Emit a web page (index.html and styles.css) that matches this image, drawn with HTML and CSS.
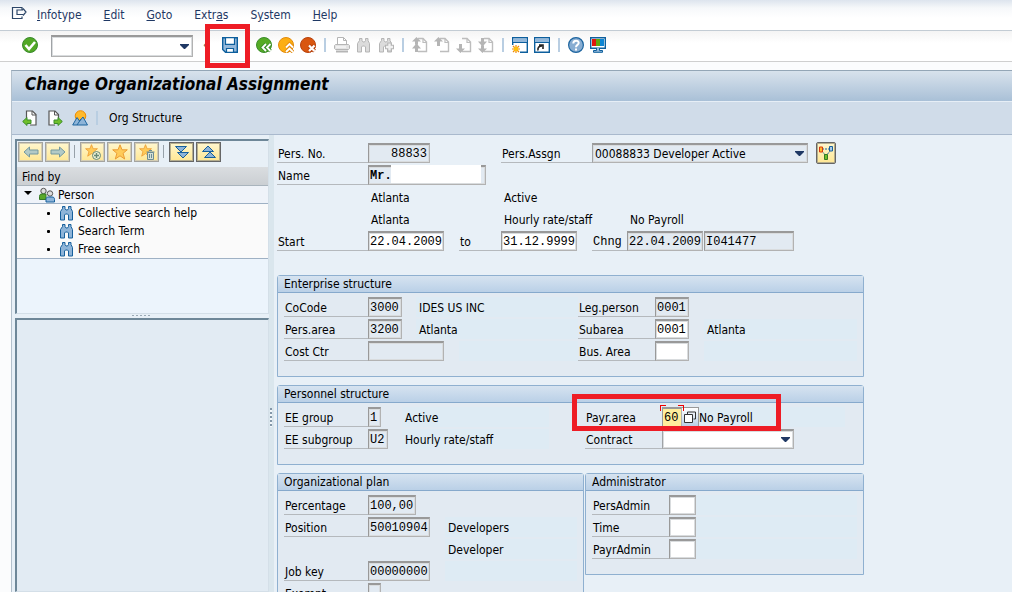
FILE: index.html
```html
<!DOCTYPE html>
<html lang="en">
<head>
    <meta charset="UTF-8">
    <meta name="viewport" content="width=device-width, initial-scale=1.0">
    <title>Change Organizational Assignment</title>
    <link rel="stylesheet" href="styles.css">
</head>
<body>

<!-- shared icon shapes -->
<svg class="defs" aria-hidden="true">
    <symbol id="binoculars" viewBox="0 0 16 16">
        <path d="M3.500 1.500H6v2l1 1.500h1.500l1-1.500v-2H12v2l1.500 3V15h-4v-5l-1-1h-2l-1 1v5h-4V6.500l2-3z"/>
    </symbol>
    <symbol id="page" viewBox="0 0 16 16">
        <path d="M6 1.500h5l3.500 3.500v9.500H6" fill="none" stroke-width="1.400"/>
        <path d="M11 1.500v4h3.500" fill="none" stroke-width="1.200"/>
    </symbol>
    <symbol id="star" viewBox="0 0 16 16">
        <path d="M8 .8l2 5h5.300l-4.200 3.500 1.600 5.700L8 11.800 3.300 15l1.600-5.700L.7 5.800H6z"/>
    </symbol>
</svg>

<nav class="menubar">
    <button class="icon-btn" type="button" aria-label="Menu">
        <svg viewBox="0 0 16 14"><path d="M11 10.500v2H1.500v-11H11v2M12 8.500H6V4h6M12 2.500l3 3.500-3 3.500" fill="none" stroke="#2c4668" stroke-width="1.200"/></svg>
    </button>
    <a href="#"><u>I</u>nfotype</a>
    <a href="#"><u>E</u>dit</a>
    <a href="#"><u>G</u>oto</a>
    <a href="#">Extr<u>a</u>s</a>
    <a href="#">S<u>y</u>stem</a>
    <a href="#"><u>H</u>elp</a>
</nav>

<div class="toolbar">
    <button class="icon-btn" type="button" aria-label="Enter">
        <svg viewBox="0 0 16 16"><circle cx="8" cy="8" r="7.500" fill="#52a826" stroke="#3a8a2c"/><path d="M3.500 8l3.500 4L13 5" fill="none" stroke="#fff" stroke-width="2.600"/></svg>
    </button>
    <select class="command" aria-label="Command"><option></option></select>
    <span class="collapse">«</span>
    <div class="save">
        <button class="icon-btn" type="button" aria-label="Save">
            <svg viewBox="0 0 16 16"><path d="M.7.700h14.600v14.600H3.500L.7 12.500z" fill="#94b8da" stroke="#0d5f9d" stroke-width="1.400"/><path d="M3.500.700h9v6.600h-9z" fill="#fff" stroke="#0d5f9d" stroke-width="1.200"/><path d="M4.500 11.500h7v3.800h-7z" fill="#fff" stroke="#0d5f9d" stroke-width="1.200"/></svg>
        </button>
        <span class="mark mark-save"></span>
    </div>
    <button class="icon-btn" type="button" aria-label="Back">
        <svg viewBox="0 0 16 16"><circle cx="8" cy="8" r="7.500" fill="#56ab26" stroke="#3b8d2a"/><path d="M10 7L6.500 10.500 10 14M14.500 7L11 10.500l3.500 3.500" fill="none" stroke="#3b8d2a" stroke-width="3.600"/><path d="M10 7L6.500 10.500 10 14M14.500 7L11 10.500l3.500 3.500" fill="none" stroke="#fff" stroke-width="1.800"/></svg>
    </button>
    <button class="icon-btn" type="button" aria-label="Exit">
        <svg viewBox="0 0 16 16"><circle cx="8" cy="8" r="7.500" fill="#fcae12" stroke="#e28a0c"/><path d="M8 10.500L11.500 7l3.500 3.500M8 15l3.500-3.500L15 15" fill="none" stroke="#e28a0c" stroke-width="3.600"/><path d="M8 10.500L11.500 7l3.500 3.500M8 15l3.500-3.500L15 15" fill="none" stroke="#fff" stroke-width="1.800"/></svg>
    </button>
    <button class="icon-btn" type="button" aria-label="Cancel">
        <svg viewBox="0 0 16 16"><circle cx="8" cy="8" r="7.500" fill="#d9560f" stroke="#b8420c"/><path d="M9 8.500l5.500 5.500M14.500 8.500L9 14" stroke="#b8420c" stroke-width="4"/><path d="M9 8.500l5.500 5.500M14.500 8.500L9 14" stroke="#fff" stroke-width="2.200"/></svg>
    </button>
    <span class="sep"></span>
    <button class="icon-btn" type="button" aria-label="Print">
        <svg viewBox="0 0 16 16" stroke="#b5b5b5"><path d="M3.500 7V.500h6l3 3V7" fill="#fff"/><path d="M9.500.500v3h3" fill="none"/><path d="M1.500 7.500h13l1 1v3l-1 1h-13l-1-1v-3z" fill="#e3e3e3"/><path d="M2 10h10" stroke="#fff"/><path d="M2 14.500h12" stroke-width="2"/></svg>
    </button>
    <button class="icon-btn" type="button" aria-label="Find">
        <svg class="binoc-off"><use href="#binoculars"/></svg>
    </button>
    <button class="icon-btn" type="button" aria-label="Find next">
        <svg class="binoc-off" viewBox="0 0 16 16"><use href="#binoculars" width="16" height="16"/><path d="M11.500 5.500v9M7 10h9" stroke="#b5b5b5" stroke-width="4.500"/><path d="M11.500 6.500v7M8 10h7" stroke="#f0f0f0" stroke-width="2.400"/></svg>
    </button>
    <span class="sep"></span>
    <button class="icon-btn" type="button" aria-label="First page">
        <svg viewBox="0 0 16 16" stroke="#bdbdbd"><use href="#page"/><path d="M4.500 0L9 4.500H6v3h-.5L9 11.500H6V15H3v-3.500H0l3.500-4H3v-3H0z" fill="#b5b5b5" stroke="none"/></svg>
    </button>
    <button class="icon-btn" type="button" aria-label="Previous page">
        <svg viewBox="0 0 16 16" stroke="#bdbdbd"><use href="#page"/><path d="M4.500 0L9 4.500H6V9H3V4.500H0z" fill="#b5b5b5" stroke="none"/></svg>
    </button>
    <button class="icon-btn" type="button" aria-label="Next page">
        <svg viewBox="0 0 16 16" stroke="#bdbdbd"><use href="#page"/><path d="M4.500 16L9 11.500H6V7H3v4.500H0z" fill="#b5b5b5" stroke="none"/></svg>
    </button>
    <button class="icon-btn" type="button" aria-label="Last page">
        <svg viewBox="0 0 16 16" stroke="#bdbdbd"><use href="#page"/><path d="M4.500 16L9 11.500H6v-3h-.5L9 4.500H6V1H3v3.500H0l3.500 4H3v3H0z" fill="#b5b5b5" stroke="none"/></svg>
    </button>
    <span class="sep"></span>
    <button class="icon-btn" type="button" aria-label="New session">
        <svg viewBox="0 0 16 16"><path d="M.7 8V.700h14.600v14.600H8" fill="#fff" stroke="#0d5f9d" stroke-width="1.400"/><path d="M1 1.500h14v3.500H1z" fill="#94b8da"/><path d="M0 5.500h16" stroke="#0d5f9d"/><path d="M4 8v8M0 12h8M1 9l6 6M7 9l-6 6" stroke="#f08a00" stroke-width="1.200"/><circle cx="4" cy="12" r="2.300" fill="#ffc20e"/></svg>
    </button>
    <button class="icon-btn" type="button" aria-label="Shortcut">
        <svg viewBox="0 0 16 16"><path d="M.7.700h14.600v14.600H.7z" fill="#fff" stroke="#0d5f9d" stroke-width="1.400"/><path d="M1 1.500h14v3.500H1z" fill="#94b8da"/><path d="M0 5.500h16" stroke="#0d5f9d"/><path d="M4 13.500c-.5-3 1-4.500 4-4.500M5 8h4v4" fill="none" stroke="#222" stroke-width="1.600"/></svg>
    </button>
    <span class="sep"></span>
    <button class="icon-btn" type="button" aria-label="Help">
        <svg viewBox="0 0 16 16"><circle cx="8" cy="8" r="7.400" fill="#88add2" stroke="#1d659f" stroke-width="1.200"/><path d="M5.300 6.500c0-4 5.600-3.500 5.400-.5C10.600 8 8 7.800 8 10.200M8 11.500v2" fill="none" stroke="#fff" stroke-width="2"/></svg>
    </button>
    <button class="icon-btn" type="button" aria-label="Customize layout">
        <svg viewBox="0 0 16 16"><path d="M.7.700h14.600v10.600H.7z" fill="#fff" stroke="#0d5f9d" stroke-width="1.400"/><path d="M2 2h4v7H2z" fill="#e0160c"/><path d="M6 2h4v7H6z" fill="#62a80d"/><path d="M10 2h4v7h-4z" fill="#0e86d4"/><path d="M6.500 11v2.500h-3v1.800h9v-1.800h-3V11" fill="#94b8da" stroke="#0d5f9d"/></svg>
    </button>
</div>

<main class="window">
    <h1>Change Organizational Assignment</h1>
    <div class="app-toolbar">
        <button class="icon-btn" type="button" aria-label="Previous record">
            <svg viewBox="0 0 16 16"><path d="M4.500 8V1h6l3.500 3.500V15H8" fill="#fff" stroke="#555" stroke-width="1.200"/><path d="M10 1v4h4" fill="none" stroke="#555"/><path d="M.7 11.500L5 7.500V10h4v3.500H5v2z" fill="#6fbf2b" stroke="#3b8d2a"/></svg>
        </button>
        <button class="icon-btn" type="button" aria-label="Next record">
            <svg viewBox="0 0 16 16"><path d="M8 15H2V1h6l3.500 3.500V8" fill="#fff" stroke="#555" stroke-width="1.200"/><path d="M7.500 1v4h4" fill="none" stroke="#555"/><path d="M15.300 11.500L11 7.500V10H7v3.500h4v2z" fill="#6fbf2b" stroke="#3b8d2a"/></svg>
        </button>
        <button class="icon-btn" type="button" aria-label="Overview">
            <svg viewBox="0 0 16 16"><circle cx="8.500" cy="6" r="5.300" fill="#ffb92b" stroke="#f08c00"/><path d="M.7 15L5 7.500l2.500 3.500L11 7l4.500 8z" fill="#8eb4d8" stroke="#1d659f"/><path d="M5 15l4-6" stroke="#1d659f"/></svg>
        </button>
        <span class="sep"></span>
        <button class="text-btn" type="button">Org Structure</button>
    </div>

    <div class="workspace">
        <aside class="sidebar">
            <div class="panel tree-panel">
                <div class="tree-tools">
                    <button class="tool off" type="button" aria-label="Back"><svg viewBox="0 0 16 16"><path d="M1 8l5.500-5v3H15v4H6.500v3z" fill="#b3cac6" stroke="#7599a0"/></svg></button>
                    <button class="tool off" type="button" aria-label="Forward"><svg viewBox="0 0 16 16"><path d="M15 8L9.500 3v3H1v4h8.500v3z" fill="#b3cac6" stroke="#7599a0"/></svg></button>
                    <span class="sep"></span>
                    <button class="tool off" type="button" aria-label="Add favorite"><svg viewBox="0 0 16 16"><use class="star" href="#star" width="13" height="13"/><circle cx="11.500" cy="11.500" r="4" fill="#eef1d5" stroke="#688a75"/><path d="M11.500 9v5M9 11.500h5" stroke="#688a75" stroke-width="1.400"/></svg></button>
                    <button class="tool off" type="button" aria-label="Favorites"><svg viewBox="0 0 16 16"><use class="star" href="#star"/></svg></button>
                    <button class="tool off" type="button" aria-label="Delete favorite"><svg viewBox="0 0 16 16"><use class="star" href="#star" width="13" height="13"/><path d="M8.500 8.500h6v7h-6zM7.500 8h8M10 6.500h3M10.500 10v4M12.500 10v4" fill="#d5e0d5" stroke="#6d8c95"/></svg></button>
                    <span class="sep"></span>
                    <button class="tool" type="button" aria-label="Expand"><svg viewBox="0 0 16 16" fill="#8eb4d8" stroke="#17609c"><path d="M1.500 2.500h11L7 8z"/><path d="M3.500 8.500h11L9 14z"/></svg></button>
                    <button class="tool" type="button" aria-label="Collapse"><svg viewBox="0 0 16 16" fill="#8eb4d8" stroke="#17609c"><path d="M1.500 7.500h11L7 2z"/><path d="M3.500 13.500h11L9 8z"/></svg></button>
                </div>
                <h2 class="find-by">Find by</h2>
                <div class="tree-root">
                    <span class="triangle"></span>
                    <svg class="icon" viewBox="0 0 16 16"><circle cx="4.500" cy="4" r="2.700" fill="#ddd" stroke="#555"/><path d="M.5 12.500V9.500c0-2 1-2.500 2.500-2.500h4v5.500z" fill="#59a82a" stroke="#347a24"/><circle cx="11" cy="6.500" r="2.700" fill="#ddd" stroke="#555"/><path d="M7 15v-2.500c0-2 1-2.500 2.500-2.500h3.500c1.500 0 2.500.5 2.500 2.500V15z" fill="#8eb4d8" stroke="#17609c"/></svg>
                    <span>Person</span>
                </div>
                <ul class="tree">
                    <li><svg class="icon binoc"><use href="#binoculars"/></svg><a href="#">Collective search help</a></li>
                    <li><svg class="icon binoc"><use href="#binoculars"/></svg><a href="#">Search Term</a></li>
                    <li><svg class="icon binoc"><use href="#binoculars"/></svg><a href="#">Free search</a></li>
                </ul>
            </div>
            <div class="grip-h"></div>
            <div class="panel result-panel"></div>
        </aside>

        <div class="splitter"></div>

        <form class="form">
            <div class="grid head">
                <label for="persNo">Pers. No.</label>
                <input class="c8 right" id="persNo" value="88833" readonly>
                <label class="col-4" for="persAssgn">Pers.Assgn</label>
                <div class="assign">
                    <select id="persAssgn" class="readonly"><option>00088833 Developer Active</option></select>
                    <button class="tool small" type="button" aria-label="Assignment overview"><svg viewBox="0 0 16 16"><path d="M4 4h8M4 6l4 5 4-5" fill="none" stroke="#17609c" stroke-dasharray="2 1"/><path d="M1.500 2h3v5h-3z" fill="#ffb92b" stroke="#d9380f"/><path d="M11.500 1.500h3v4.500h-3z" fill="#a9cbe8" stroke="#17609c"/><path d="M6.500 9.500h3v5h-3z" fill="#6fbf2b" stroke="#347a24"/></svg></button>
                </div>

                <label for="name">Name</label>
                <div class="name">
                    <input class="c16 bold" id="name" value="Mr." readonly>
                    <span class="blank"></span>
                </div>

                <output class="col-2">Atlanta</output>
                <output class="col-4">Active</output>

                <output class="col-2">Atlanta</output>
                <output class="col-4">Hourly rate/staff</output>
                <output class="col-6">No Payroll</output>

                <label for="start">Start</label>
                <input class="c10" id="start" value="22.04.2009">
                <label for="end">to</label>
                <input class="c10" id="end" value="31.12.9999">
                <label class="mono" for="chngDate">Chng</label>
                <div class="pair">
                    <input class="c10" id="chngDate" value="22.04.2009" readonly>
                    <input class="c12" aria-label="Changed by" value="I041477" readonly>
                </div>
            </div>

            <section class="group">
                <h2>Enterprise structure</h2>
                <div class="grid enterprise">
                    <label for="coCode">CoCode</label>
                    <input class="c4" id="coCode" value="3000" readonly>
                    <output>IDES US INC</output>
                    <label for="legPerson">Leg.person</label>
                    <input class="c4" id="legPerson" value="0001" readonly>

                    <label class="col-1" for="persArea">Pers.area</label>
                    <input class="c4" id="persArea" value="3200" readonly>
                    <output>Atlanta</output>
                    <label for="subarea">Subarea</label>
                    <input class="c4" id="subarea" value="0001">
                    <output>Atlanta</output>

                    <label for="costCtr">Cost Ctr</label>
                    <div class="cost">
                        <input class="c10" id="costCtr" readonly>
                        <output></output>
                    </div>
                    <label for="busArea">Bus. Area</label>
                    <input class="c4" id="busArea">
                    <output></output>
                </div>
            </section>

            <section class="group">
                <h2>Personnel structure</h2>
                <div class="grid personnel">
                    <label for="eeGroup">EE group</label>
                    <input class="c1" id="eeGroup" value="1" readonly>
                    <output>Active</output>
                    <label class="col-5" for="payrArea">Payr.area</label>
                    <div class="payroll">
                        <input class="c2 focus" id="payrArea" value="60">
                        <button class="f4" type="button" aria-label="Possible entries"><svg viewBox="0 0 12 12"><path d="M3.500 3V1h8v7h-2" fill="none" stroke="#333"/><path d="M.5 3.500h8v8h-8z" fill="#fff" stroke="#333"/></svg></button>
                        <output>No Payroll</output>
                        <span class="corners"></span>
                        <span class="mark mark-payroll"></span>
                    </div>

                    <label for="eeSubgroup">EE subgroup</label>
                    <input class="c2" id="eeSubgroup" value="U2" readonly>
                    <output>Hourly rate/staff</output>
                    <label class="col-5" for="contract">Contract</label>
                    <select id="contract" class="contract"><option></option></select>
                </div>
            </section>

            <div class="columns">
                <section class="group">
                    <h2>Organizational plan</h2>
                    <div class="grid plan">
                        <label for="percentage">Percentage</label>
                        <input class="c6" id="percentage" value="100,00" readonly>

                        <label class="col-1" for="position">Position</label>
                        <input class="c8" id="position" value="50010904" readonly>
                        <output>Developers</output>

                        <output class="col-3">Developer</output>

                        <label for="jobKey">Job key</label>
                        <input class="c8" id="jobKey" value="00000000" readonly>
                        <output></output>

                        <label for="exempt">Exempt</label>
                        <input class="c1" id="exempt" readonly>
                    </div>
                </section>

                <section class="group">
                    <h2>Administrator</h2>
                    <div class="grid admin">
                        <label for="persAdmin">PersAdmin</label>
                        <input class="c3" id="persAdmin">
                        <output></output>
                        <label for="time">Time</label>
                        <input class="c3" id="time">
                        <output></output>
                        <label for="payrAdmin">PayrAdmin</label>
                        <input class="c3" id="payrAdmin">
                        <output></output>
                    </div>
                </section>
            </div>
        </form>
    </div>
</main>

</body>
</html>
```
FILE: styles.css
```css
* {
    box-sizing: border-box;
}
body {
    font-family: "DejaVu Sans Condensed", "Noto Sans", sans-serif;
    font-size: 12px;
    line-height: 16px;
    color: #000;
    background-color: #fbfcfd;
    margin: 0;
    height: 100vh;
    overflow: hidden;
    display: flex;
    flex-direction: column;
}
h1, h2, ul {
    margin: 0;
    padding: 0;
    font-weight: 400;
    font-size: 12px;
}
button, input, select {
    font: inherit;
    color: inherit;
    margin: 0;
    padding: 0;
    border: 0;
    outline: none;
}
.defs {
    position: absolute;
    width: 0;
    height: 0;
}
.icon-btn {
    flex: none;
    width: 16px;
    height: 16px;
    background: none;
}
.icon-btn svg, .tool svg, .icon {
    display: block;
    flex: none;
    width: 16px;
    height: 16px;
}
.sep {
    width: 2px;
    height: 14px;
    margin: 0 2px;
    background-color: #b9cee2;
}

/* menu bar */
.menubar {
    flex: none;
    display: flex;
    align-items: center;
    gap: 22px;
    height: 31px;
    padding-left: 11px;
    background: linear-gradient(#dde4ee, #f6f8fa 8px, #fff 18px);
    border-bottom: 1px solid #c3ccd4;
}
.menubar a {
    color: #1f3864;
    text-decoration: none;
}
.menubar .icon-btn {
    margin: 0 -12px 4px 0;
}

/* standard toolbar */
.toolbar {
    flex: none;
    display: flex;
    align-items: center;
    gap: 6px;
    height: 31px;
    padding: 0 0 2px 22px;
    background: linear-gradient(#f4f4f4, #fff 12px);
    border-bottom: 1px solid #cfcfcf;
}
select {
    appearance: none;
    border: 1px solid #a0a3a6;
    border-top: 2px solid #999;
    border-right-color: #b2b2b2;
    border-bottom-color: #b2b2b2;
    background: #fff url("data:image/svg+xml,%3Csvg xmlns='http://www.w3.org/2000/svg' width='9' height='5'%3E%3Cpath d='M0 0h9v1L5 5H4L0 1z' fill='%231f3864'/%3E%3C/svg%3E") no-repeat right 3px center;
    box-shadow: inset 0 0 0 1px #d9dcde;
}
.command {
    width: 142px;
    height: 22px;
    margin: 2px 2px 0 7px;
}
.collapse {
    width: 10px;
    margin-left: 2px;
    color: #555;
}
.save {
    position: relative;
    display: flex;
    margin: 0 12px 0 3px;
}
.mark {
    position: absolute;
    border: 5px solid #ee1c25;
    pointer-events: none;
    z-index: 2;
}
.mark-save {
    left: -17px;
    top: -13px;
    width: 45px;
    height: 44px;
}
.binoc {
    fill: #8eb4d8;
    stroke: #17609c;
}
.binoc-off {
    fill: #dcdcdc;
    stroke: #b5b5b5;
}

/* window */
.window {
    flex: 1;
    min-height: 0;
    display: flex;
    flex-direction: column;
    margin: 8px 0 0 11px;
    border-top: 1px solid #94a6b6;
    border-left: 1px solid #b3c0cc;
    background-color: #e8f0f7;
}
h1 {
    flex: none;
    height: 31px;
    padding-left: 13px;
    font-size: 17px;
    line-height: 26px;
    font-weight: 700;
    font-style: italic;
    background: linear-gradient(#d8e2ec, #a9c0d7);
    border-bottom: 1px solid #e6eef6;
}
.app-toolbar {
    flex: none;
    display: flex;
    align-items: center;
    gap: 9px;
    height: 33px;
    padding: 0 0 1px 10px;
    background-color: #d0dce9;
    border-bottom: 1px solid #a9b9cd;
}
.app-toolbar .sep {
    margin: 0 -1px;
}
.text-btn {
    background: none;
    margin-left: 3px;
}
.workspace {
    flex: 1;
    min-height: 0;
    display: flex;
}

/* left side */
.sidebar {
    flex: none;
    display: flex;
    flex-direction: column;
    width: 257px;
    padding: 4px 0 0 3px;
}
.panel {
    border: 1px solid #d4dfe8;
    border-top: 2px solid #6e8798;
    border-left: 2px solid #6e8798;
    background-color: #ecf4fc;
}
.tree-panel {
    height: 175px;
}
.result-panel {
    flex: 1;
    background-color: #e2ebf3;
}
.grip-h {
    height: 4px;
    width: 20px;
    margin: 0 auto;
    background: repeating-linear-gradient(90deg, #9aa9b5 0 2px, transparent 2px 4px) no-repeat 0 1px / 100% 1px;
}
.tree-tools {
    display: flex;
    align-items: flex-start;
    gap: 2px;
    padding: 1px;
    height: 26px;
    background-color: #e8f0f7;
}
.tree-tools .sep {
    width: 1px;
    height: 13px;
    margin: 3px 3px 0 2px;
    background-color: #97a1a9;
}
.tool {
    display: flex;
    align-items: center;
    justify-content: center;
    width: 25px;
    height: 20px;
    border: 1px solid #666;
    background: linear-gradient(#fff7cf, #ffe793);
    box-shadow: inset 0 0 0 1px #b5ad8c;
}
.tool.off {
    border-color: #a4a4a0;
    box-shadow: inset 0 0 0 1px #d4cdb3;
}
.tool.small {
    flex: none;
    width: 20px;
    height: 22px;
    border-radius: 2px;
}
.star {
    fill: #ffcb58;
    stroke: #ec9c34;
}
.find-by {
    height: 19px;
    padding: 2px 5px;
    background: linear-gradient(#dadde0, #cbcfd3);
    border-bottom: 1px solid #a9b4bd;
}
.tree-root {
    display: flex;
    align-items: center;
    gap: 3px;
    height: 18px;
    padding: 0 7px;
    background-color: #eff3f9;
    border-bottom: 1px solid #9fb1c4;
}
.triangle {
    border: 4px solid transparent;
    border-top-color: #000;
    border-bottom: 0;
    margin: 0 4px 3px 0;
}
.tree {
    list-style: none;
    background-color: #fafafa;
    border-bottom: 1px solid #9fb1c4;
}
.tree li {
    display: flex;
    align-items: center;
    gap: 3px;
    height: 18px;
    padding-left: 30px;
}
.tree li::before {
    content: "";
    width: 3px;
    height: 3px;
    border-radius: 1px;
    margin-right: 6px;
    background-color: #000;
}
.tree a {
    color: #000;
    text-decoration: none;
}
.splitter {
    flex: none;
    width: 5px;
    background: repeating-linear-gradient(#8497a8 0 2px, #f4f8fb 2px 4px) no-repeat 1px 273px / 2px 19px, #dae6ed;
}

/* form */
.form {
    flex: 1;
    min-width: 0;
    padding: 8px 3px;
}
.grid {
    display: grid;
    grid-auto-rows: 20px;
    row-gap: 2px;
}
.head {
    grid-template-columns: 91px 91px 42px 91px 35px auto;
    justify-content: start;
    padding-bottom: 24px;
}
.col-1 { grid-column: 1; }
.col-2 { grid-column: 2; }
.col-3 { grid-column: 3; }
.col-4 { grid-column: 4; }
.col-5 { grid-column: 5; }
.col-6 { grid-column: 6; }
label {
    height: 20px;
    padding: 3px 1px 0;
    white-space: nowrap;
    border-bottom: 1px solid #b5b9bd;
}
output {
    display: block;
    height: 20px;
    padding: 3px 3px 0;
    white-space: nowrap;
}
.group output {
    background-color: #deebf4;
}
input {
    height: 20px;
    padding: 0 0 0 1px;
    font-family: "Liberation Mono", monospace;
    border: 1px solid #b2b2b2;
    border-top: 2px solid #999;
    border-left: 1px solid #999;
    background-color: #fff;
    box-shadow: inset 0 0 0 1px #d9dcde;
}
input[readonly], .readonly {
    background-color: #e2eaf2;
}
.mono {
    font-family: "Liberation Mono", monospace;
}
.right {
    text-align: right;
    padding-right: 2px;
}
.bold {
    font-weight: 700;
}

/* field widths, by character count */
.c1 { width: 13px; }
.c2 { width: 20px; }
.c3 { width: 27px; }
.c4 { width: 34px; }
.c6 { width: 48px; }
.c8 { width: 62px; }
.c10 { width: 76px; }
.c12 { width: 90px; }
.c16 { width: 118px; }

.assign {
    grid-column: span 2;
    display: flex;
    align-items: center;
    gap: 8px;
}
.assign select {
    width: 216px;
    height: 20px;
    padding-left: 2px;
}
.name {
    position: relative;
    grid-column: span 5;
}
.name input {
    display: block;
}
.blank {
    position: absolute;
    left: 23px;
    top: 0;
    width: 90px;
    height: 18px;
    background-color: #fff;
}
.pair {
    display: flex;
    gap: 1px;
}

/* groups */
.group {
    max-width: 587px;
    margin-bottom: 8px;
    border: 1px solid #8fb0d0;
    border-radius: 3px 3px 0 0;
    background-color: #e2eaf2;
}
.group h2 {
    height: 17px;
    padding-left: 6px;
    line-height: 16px;
    background: linear-gradient(#d6e3f0, #bad0e7);
    border-bottom: 1px solid #86a9cc;
}
.group .grid {
    padding: 4px 6px 15px;
}
.enterprise {
    grid-template-columns: 84px 48px 162px 77px 49px 1fr;
}
.cost {
    grid-column: span 2;
    display: flex;
    gap: 15px;
}
.cost output {
    flex: 1;
}
.personnel {
    grid-template-columns: 84px 34px 147px 36px 77px 1fr;
}
.payroll {
    position: relative;
    display: flex;
}
.payroll output {
    padding-left: 0;
    width: 146px;
}
.focus {
    background-color: #ffee9c;
    box-shadow: none;
}
.f4 {
    width: 17px;
    height: 20px;
    padding: 2px;
    border: 1px solid #999;
    border-left: 0;
    background: linear-gradient(#fff, #b9cfe4);
}
.f4 svg {
    display: block;
    width: 12px;
    height: 12px;
}
.corners {
    position: absolute;
    left: -2px;
    top: -2px;
    width: 24px;
    height: 22px;
    background:
        linear-gradient(#e00 0 0) 0 0 / 6px 1px,
        linear-gradient(#e00 0 0) 0 0 / 1px 6px,
        linear-gradient(#e00 0 0) 100% 0 / 6px 1px,
        linear-gradient(#e00 0 0) 100% 0 / 1px 6px;
    background-repeat: no-repeat;
}
.mark-payroll {
    left: -90px;
    top: -13px;
    width: 209px;
    height: 37px;
}
.contract {
    width: 132px;
    height: 20px;
}
.columns {
    display: grid;
    grid-template-columns: 307px 279px;
    gap: 1px;
    align-items: start;
}
.plan {
    grid-template-columns: 84px 77px 1fr;
}
.admin {
    grid-template-columns: 77px 27px 1fr;
}
```
